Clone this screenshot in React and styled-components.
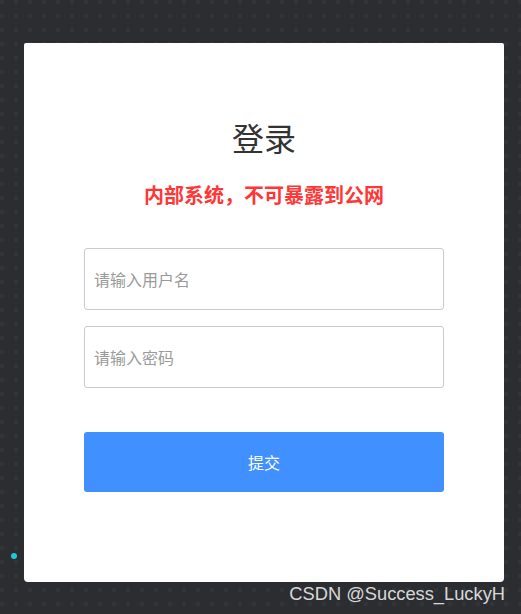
import styled, { createGlobalStyle } from 'styled-components'

const GlobalStyle = createGlobalStyle`
  html, body {
    margin: 0;
    padding: 0;
  }
  body {
    font-family: "Noto Sans CJK SC", "Liberation Sans", sans-serif;
    background-color: #2c2d31;
  }
`

const Page = styled.div`
  position: relative;
  width: 521px;
  height: 614px;
  overflow: hidden;
  background-color: #2c2d31;
  background-image:
    linear-gradient(90deg, transparent 4px, #2c2d31 4px),
    linear-gradient(#33343a 4px, transparent 4px);
  background-size: 14px 14px;
  background-position: 0 0;
  display: flex;
  flex-direction: column;
  padding: 43px 16px 0 24px;
  box-sizing: border-box;
`

const Card = styled.div`
  width: 480px;
  height: 539px;
  background: #ffffff;
  border-radius: 2px 2px 4px 4px;
  display: flex;
  flex-direction: column;
  align-items: center;
  padding-top: 73px;
  box-sizing: border-box;
`

const Title = styled.h1`
  margin: 0;
  font-size: 32px;
  font-weight: 400;
  line-height: 42px;
  color: #333333;
`

const Warning = styled.p`
  margin: 23px 0 0;
  font-size: 20px;
  font-weight: 700;
  line-height: 28px;
  color: #ff3636;
`

const Form = styled.form`
  width: 360px;
  margin-top: 39px;
  display: flex;
  flex-direction: column;
  gap: 16px;
`

const Input = styled.input`
  width: 100%;
  height: 62px;
  box-sizing: border-box;
  border: 1px solid #c9c9cf;
  border-radius: 3px;
  padding: 0 9px;
  font-family: inherit;
  font-size: 16px;
  color: #333;
  outline: none;

  &::placeholder {
    color: #9a9a9a;
  }
`

const Submit = styled.button`
  margin-top: 28px;
  width: 100%;
  height: 60px;
  border: none;
  border-radius: 3px;
  background: #4091ff;
  color: #ffffff;
  font-family: inherit;
  font-size: 16px;
  cursor: pointer;
`

const Watermark = styled.div`
  align-self: flex-end;
  margin-top: 0;
  font-family: "Liberation Sans", Arial, sans-serif;
  font-size: 18.3px;
  line-height: 24px;
  color: #d8d8d8;
`

const Dot = styled.span`
  position: absolute;
  left: 11px;
  top: 553px;
  width: 6px;
  height: 6px;
  border-radius: 50%;
  background: #1ec8d8;
`

export default function App() {
  return (
    <>
      <GlobalStyle />
      <Page>
        <Card>
          <Title>登录</Title>
          <Warning>内部系统，不可暴露到公网</Warning>
          <Form onSubmit={e => e.preventDefault()}>
            <Input type='text' placeholder='请输入用户名' />
            <Input type='password' placeholder='请输入密码' />
            <Submit type='submit'>提交</Submit>
          </Form>
        </Card>
        <Watermark>CSDN @Success_LuckyH</Watermark>
        <Dot />
      </Page>
    </>
  )
}
